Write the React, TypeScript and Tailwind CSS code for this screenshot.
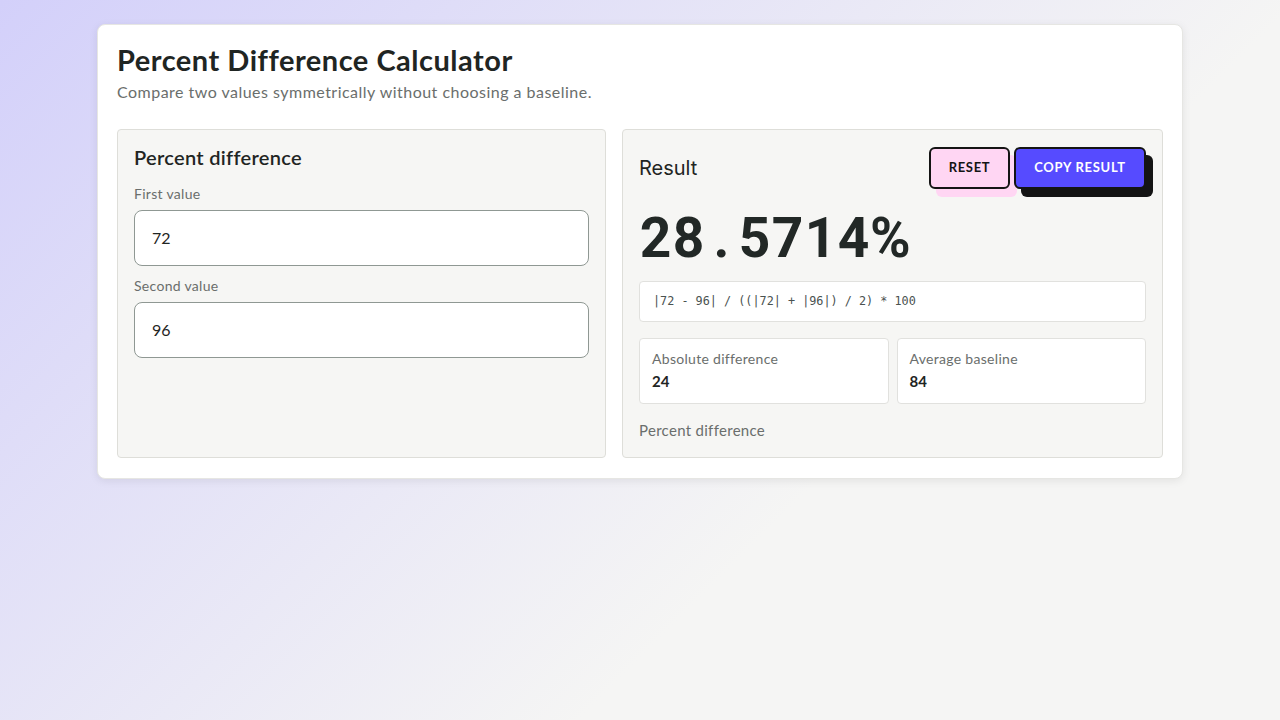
import React from "react";

const sans = { fontFamily: "Lato, 'Open Sans', sans-serif" };

function BigNumber({ text }: { text: string }) {
  return (
    <div className="flex text-[55px] font-bold leading-none text-[#222826]" style={{ fontFamily: "Roboto, sans-serif" }}>
      {text.split("").map((c, i) => (
        <span key={i} className="inline-block w-[33px] text-center">
          {c}
        </span>
      ))}
    </div>
  );
}

export default function App() {
  return (
    <div
      className="min-h-screen w-full bg-[linear-gradient(135deg,#d3d0fa_0%,#f5f5f4_65%)] pt-6 text-[#1f2523]"
      style={sans}
    >
      <div className="mx-auto w-[1086px] rounded-lg border border-[#e6e6e3] bg-white px-[19px] pb-[20px] pt-[17px] shadow-[0_2px_8px_rgba(0,0,0,0.08)]">
        <h1 className="text-[29px] font-bold leading-[36px] tracking-[0.5px] text-[#1f2523]">
          Percent Difference Calculator
        </h1>
        <p className="mt-[3px] text-[16px] leading-[22px] tracking-[0.48px] text-[#6a6e6c]">
          Compare two values symmetrically without choosing a baseline.
        </p>

        <div className="mt-[26px] flex gap-4">
          <div className="w-[489px] h-[329px] shrink-0 rounded border border-[#deded9] bg-[#f6f6f4] px-4 pt-[13px]">
            <h2 className="text-[20px] font-semibold leading-[28px] tracking-[0.3px]">Percent difference</h2>
            <div className="mt-[14px] text-[14px] leading-[18px] tracking-[0.3px] text-[#6a6e6c]">First value</div>
            <div className="mt-[7px] flex h-[56px] items-center rounded-lg border border-[#8f9893] bg-white px-[17px] text-[16px]">
              72
            </div>
            <div className="mt-[11px] text-[14px] leading-[18px] tracking-[0.3px] text-[#6a6e6c]">Second value</div>
            <div className="mt-[7px] flex h-[56px] items-center rounded-lg border border-[#8f9893] bg-white px-[17px] text-[16px]">
              96
            </div>
          </div>

          <div className="flex-1 rounded border border-[#deded9] bg-[#f6f6f4] px-4 pt-[17px]">
            <div className="flex items-center justify-between">
              <div className="text-[20px] leading-[28px] text-[#1f2523]" style={{ fontFamily: "Inter, sans-serif" }}>
                Result
              </div>
              <div className="flex gap-1">
                <button className="h-[42px] w-[81px] rounded-md border-2 border-[#141414] bg-[#ffd6f3] text-[13px] font-bold tracking-[0.7px] text-[#141414] shadow-[7px_8px_0_#ffd6f3]">
                  RESET
                </button>
                <button className="h-[42px] w-[132px] rounded-md border-2 border-[#141414] bg-[#564bff] text-[13px] font-bold tracking-[0.7px] text-white shadow-[7px_8px_0_#141414]">
                  COPY RESULT
                </button>
              </div>
            </div>
            <div className="mt-[22px] h-[54px]">
              <BigNumber text="28.5714%" />
            </div>
            <div
              className="mt-[16px] flex h-[41px] items-center rounded border border-[#e1e1de] bg-white px-[13px] pt-[1px] text-[11.8px] text-[#4a5250]"
              style={{ fontFamily: "'DejaVu Sans Mono', monospace" }}
            >
              |72 - 96| / ((|72| + |96|) / 2) * 100
            </div>
            <div className="mt-4 grid grid-cols-2 gap-2">
              <div className="h-[66px] rounded border border-[#e1e1de] bg-white px-[12px] pt-[11px]">
                <div className="text-[14px] leading-[18px] tracking-[0.3px] text-[#6a6e6c]">Absolute difference</div>
                <div className="mt-[3px] text-[15px] font-bold leading-[20px]">24</div>
              </div>
              <div className="h-[66px] rounded border border-[#e1e1de] bg-white px-[12px] pt-[11px]">
                <div className="text-[14px] leading-[18px] tracking-[0.3px] text-[#6a6e6c]">Average baseline</div>
                <div className="mt-[3px] text-[15px] font-bold leading-[20px]">84</div>
              </div>
            </div>
            <div className="mt-[16px] text-[15px] leading-[20px] tracking-[0.3px] text-[#6a6e6c]">Percent difference</div>
          </div>
        </div>
      </div>
    </div>
  );
}
